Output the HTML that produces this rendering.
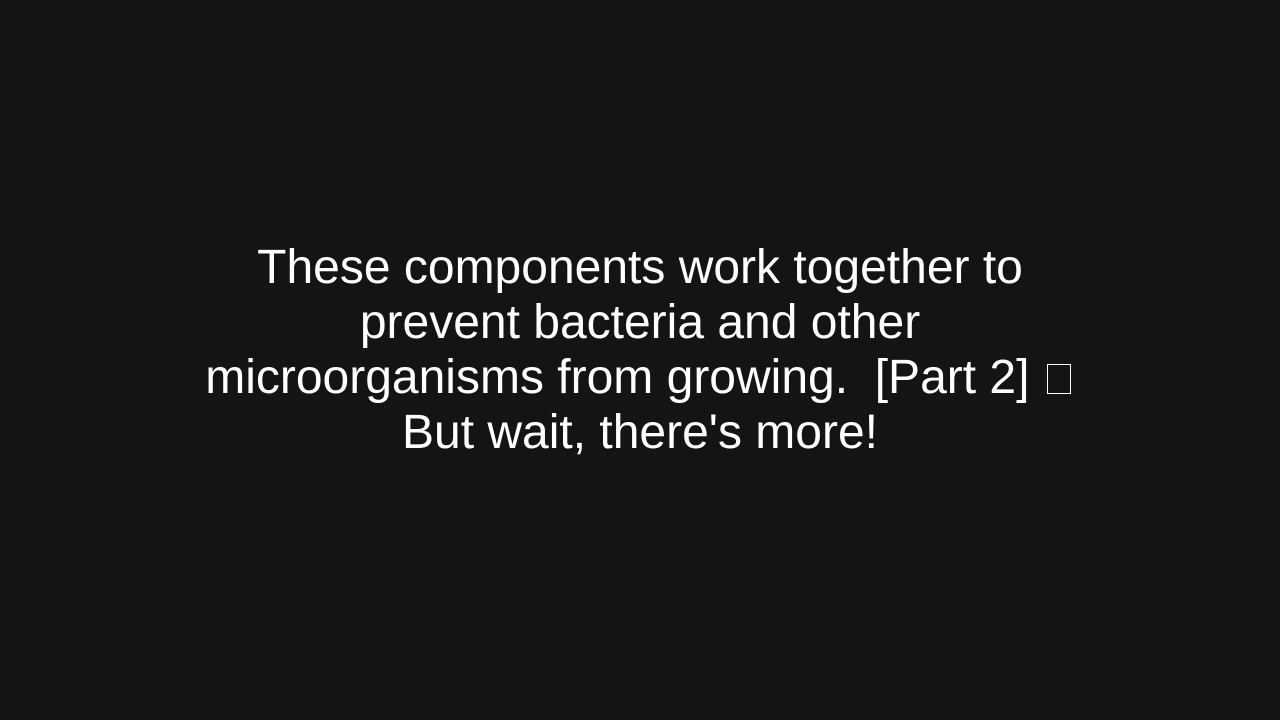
<!DOCTYPE html>
<html><head><meta charset="utf-8"><style>
html,body{margin:0;padding:0;width:1280px;height:720px;background:#141414;overflow:hidden}
.w{position:absolute;left:0;top:240px;width:1280px;text-align:center;color:#fff;font-family:"Liberation Sans",Arial,sans-serif;font-size:48px;line-height:55px}
.box{display:inline-block;width:24px;height:30px;border:1px solid #fff;box-sizing:border-box;vertical-align:-1px;margin-left:4px;margin-right:4px}
</style></head><body>
<div class="w">These components work together to<br>prevent bacteria and other<br>microorganisms from growing.&nbsp; [Part 2] <span class="box"></span><br>But wait, there's more!</div>
</body></html>
